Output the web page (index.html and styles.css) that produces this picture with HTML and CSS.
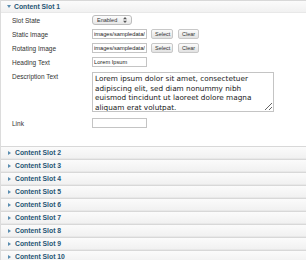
FILE: index.html
```html
<!DOCTYPE html>
<html lang="en">
<head>
    <meta charset="UTF-8">
    <meta name="viewport" content="width=device-width, initial-scale=1.0">
    <title>Content Slots</title>
    <link rel="stylesheet" href="styles.css">
</head>
<body>
    <div class="slots">
        <div class="slot open">
            <div class="slot-head"><span class="arrow down"></span>Content Slot 1</div>
            <div class="slot-body">
                <div class="field">
                    <label>Slot State</label>
                    <span class="select-wrap">
                        <select class="state"><option>Enabled</option><option>Disabled</option></select>
                        <svg class="updown" width="4" height="6" viewBox="0 0 4 6"><path d="M2 0 L4 2.3 L0 2.3 Z M2 6 L4 3.7 L0 3.7 Z" fill="#555"/></svg>
                    </span>
                </div>
                <div class="field">
                    <label>Static Image</label>
                    <input type="text" class="text" value="images/sampledata/slide1.jpg">
                    <button class="btn select">Select</button>
                    <button class="btn">Clear</button>
                </div>
                <div class="field">
                    <label>Rotating Image</label>
                    <input type="text" class="text" value="images/sampledata/slide2.jpg">
                    <button class="btn select">Select</button>
                    <button class="btn">Clear</button>
                </div>
                <div class="field">
                    <label>Heading Text</label>
                    <input type="text" class="text" value="Lorem Ipsum">
                </div>
                <div class="field top">
                    <label>Description Text</label>
                    <textarea class="desc">Lorem ipsum dolor sit amet, consectetuer
adipiscing elit, sed diam nonummy nibh
euismod tincidunt ut laoreet dolore magna
aliquam erat volutpat.</textarea>
                </div>
                <div class="field link">
                    <label>Link</label>
                    <input type="text" class="text" value="">
                </div>
            </div>
        </div>
        <div class="slot"><div class="slot-head"><span class="arrow"></span>Content Slot 2</div></div>
        <div class="slot"><div class="slot-head"><span class="arrow"></span>Content Slot 3</div></div>
        <div class="slot"><div class="slot-head"><span class="arrow"></span>Content Slot 4</div></div>
        <div class="slot"><div class="slot-head"><span class="arrow"></span>Content Slot 5</div></div>
        <div class="slot"><div class="slot-head"><span class="arrow"></span>Content Slot 6</div></div>
        <div class="slot"><div class="slot-head"><span class="arrow"></span>Content Slot 7</div></div>
        <div class="slot"><div class="slot-head"><span class="arrow"></span>Content Slot 8</div></div>
        <div class="slot"><div class="slot-head"><span class="arrow"></span>Content Slot 9</div></div>
        <div class="slot"><div class="slot-head"><span class="arrow"></span>Content Slot 10</div></div>
    </div>
</body>
</html>
```

FILE: styles.css
```css
body {
    margin: 0;
    padding: 0;
    background-color: #fff;
    font-family: "Liberation Sans", Arial, sans-serif;
}

.slots {
    border-left: 1px solid #dcdcdc;
}

.slot-head {
    box-sizing: border-box;
    height: 13px;
    border-top: 1px solid #d8d8d8;
    border-bottom: 1px solid #e8e8e8;
    background: linear-gradient(#fbfbfb, #f1f1f1);
    display: flex;
    align-items: center;
    padding-left: 7px;
    font-size: 6.8px;
    font-weight: bold;
    color: #275574;
}

.arrow {
    width: 0;
    height: 0;
    border-top: 2px solid transparent;
    border-bottom: 2px solid transparent;
    border-left: 3px solid #5a8db0;
    margin-right: 4px;
}

.arrow.down {
    border-left: 2px solid transparent;
    border-right: 2px solid transparent;
    border-top: 3px solid #5a8db0;
    border-bottom: none;
    margin-left: -1px;
    margin-right: 3px;
}

.slot-body {
    padding: 2px 0 14px 11px;
}

.field {
    display: flex;
    align-items: center;
    height: 10px;
    margin-bottom: 4px;
}

.field label {
    width: 80px;
    flex: none;
    font-size: 6.5px;
    color: #333;
}

.field.top {
    align-items: flex-start;
    height: 40px;
    margin-top: 5px;
    margin-bottom: 6px;
}

.field.top label {
    margin-top: 1px;
}

.select-wrap {
    position: relative;
    display: flex;
    height: 10px;
}

.state {
    appearance: none;
    -webkit-appearance: none;
    box-sizing: border-box;
    width: 40px;
    height: 10px;
    margin: 0;
    padding: 0 0 0 4px;
    border: 1px solid #bdbdbd;
    border-radius: 3px;
    background: linear-gradient(#fdfdfd, #e6e6e6);
    font-family: "Liberation Sans", Arial, sans-serif;
    font-size: 5.5px;
    color: #333;
    line-height: 8px;
}

.updown {
    position: absolute;
    right: 5px;
    top: 2px;
    pointer-events: none;
}

.text {
    box-sizing: border-box;
    width: 55px;
    height: 10px;
    margin: 0;
    padding: 0 1px;
    border: 1px solid #c4c4c4;
    background: #fff;
    font-family: "Liberation Sans", Arial, sans-serif;
    font-size: 5.7px;
    color: #222;
    outline: none;
}

.btn {
    box-sizing: border-box;
    height: 10px;
    margin: 0 0 0 5px;
    padding: 0 3px;
    border: 1px solid #c8c8c8;
    border-radius: 2px;
    background: linear-gradient(#fbfbfb, #e2e2e2);
    font-family: "Liberation Sans", Arial, sans-serif;
    font-size: 5.5px;
    color: #333;
    line-height: 8px;
}

.btn.select {
    margin-left: 4px;
    width: 22px;
}

.desc {
    box-sizing: border-box;
    width: 182px;
    height: 40px;
    margin: 0;
    padding: 1px 2px;
    border: 1px solid #c4c4c4;
    font-family: "DejaVu Sans", Verdana, sans-serif;
    font-size: 7.3px;
    line-height: 9.5px;
    color: #222;
    overflow: hidden;
    white-space: pre;
    outline: none;
}
```
